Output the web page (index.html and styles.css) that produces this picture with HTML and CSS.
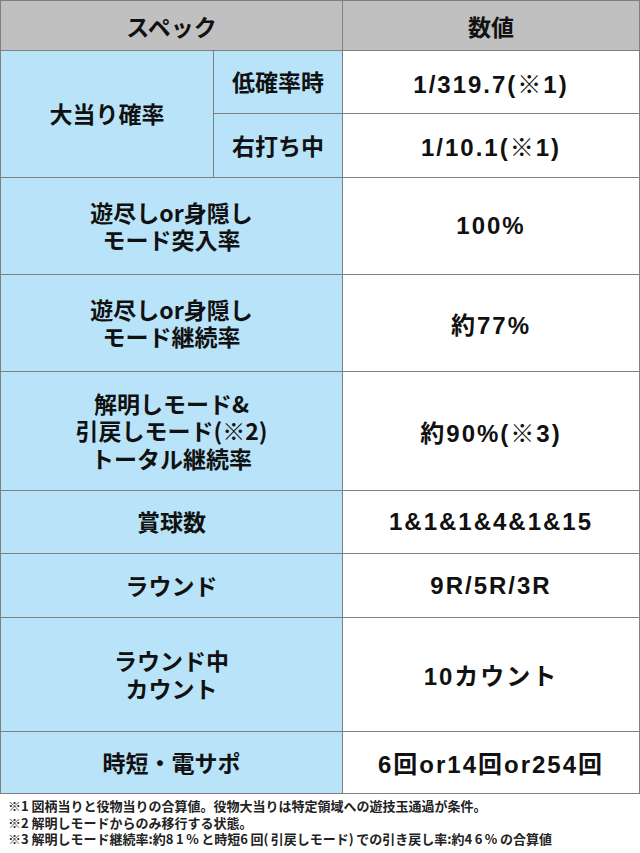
FILE: index.html
```html
<!DOCTYPE html>
<html lang="ja">
<head>
<meta charset="utf-8">
<title>スペック</title>
<link rel="stylesheet" href="styles.css">
</head>
<body>
<div class="spec">
  <div class="cell head span2">スペック</div>
  <div class="cell head">数値</div>

  <div class="cell label rowspan2">大当り確率</div>
  <div class="cell label">低確率時</div>
  <div class="cell value">1/319.7(※1)</div>
  <div class="cell label">右打ち中</div>
  <div class="cell value">1/10.1(※1)</div>

  <div class="cell label span2">遊尽しor身隠し<br>モード突入率</div>
  <div class="cell value">100%</div>

  <div class="cell label span2">遊尽しor身隠し<br>モード継続率</div>
  <div class="cell value">約77%</div>

  <div class="cell label span2">解明しモード&amp;<br>引戻しモード(※2)<br>トータル継続率</div>
  <div class="cell value">約90%(※3)</div>

  <div class="cell label span2">賞球数</div>
  <div class="cell value">1&amp;1&amp;1&amp;4&amp;1&amp;15</div>

  <div class="cell label span2">ラウンド</div>
  <div class="cell value">9R/5R/3R</div>

  <div class="cell label span2">ラウンド中<br>カウント</div>
  <div class="cell value">10カウント</div>

  <div class="cell label span2">時短・電サポ</div>
  <div class="cell value">6回or14回or254回</div>
</div>
<div class="notes">
  <p>※1 図柄当りと役物当りの合算値。役物大当りは特定領域への遊技玉通過が条件。</p>
  <p>※2 解明しモードからのみ移行する状態。</p>
  <p>※3 解明しモード継続率:約<span class="num">81%</span>と時短<span class="num">6</span>回<span class="num">(</span>引戻しモード<span class="num">)</span>での引き戻し率:約<span class="num">46%</span>の合算値</p>
</div>
</body>
</html>
```

FILE: styles.css
```css
html, body {
  margin: 0;
  padding: 0;
  background: #ffffff;
}

body {
  font-family: "Noto Sans CJK JP", "Noto Sans", sans-serif;
  color: #111111;
  width: 640px;
}

.spec {
  display: grid;
  grid-template-columns: 212px 128px 296px;
  grid-template-rows: 49px 62px 63px 96px 96px 118px 62px 63px 113px 61px;
  gap: 1px;
  padding: 1px;
  background: #808080;
  width: 640px;
  box-sizing: border-box;
}

.cell {
  display: flex;
  align-items: center;
  justify-content: center;
  text-align: center;
  font-weight: bold;
}

.head {
  background: #c0c0c0;
  font-size: 23px;
}

.label {
  background: #b9e3f8;
  font-size: 23px;
  line-height: 27.5px;
}

.value {
  background: #ffffff;
  font-family: "Liberation Sans", "Noto Sans CJK JP", sans-serif;
  font-size: 24px;
  letter-spacing: 2px;
}

.span2 {
  grid-column: span 2;
}

.rowspan2 {
  grid-row: span 2;
}

.notes {
  padding: 4px 0 0 8px;
}

.notes p {
  margin: 0;
  font-size: 13px;
  line-height: 16.5px;
  font-weight: bold;
  color: #222222;
}

.num {
  display: inline-block;
  letter-spacing: 2.5px;
}
```
